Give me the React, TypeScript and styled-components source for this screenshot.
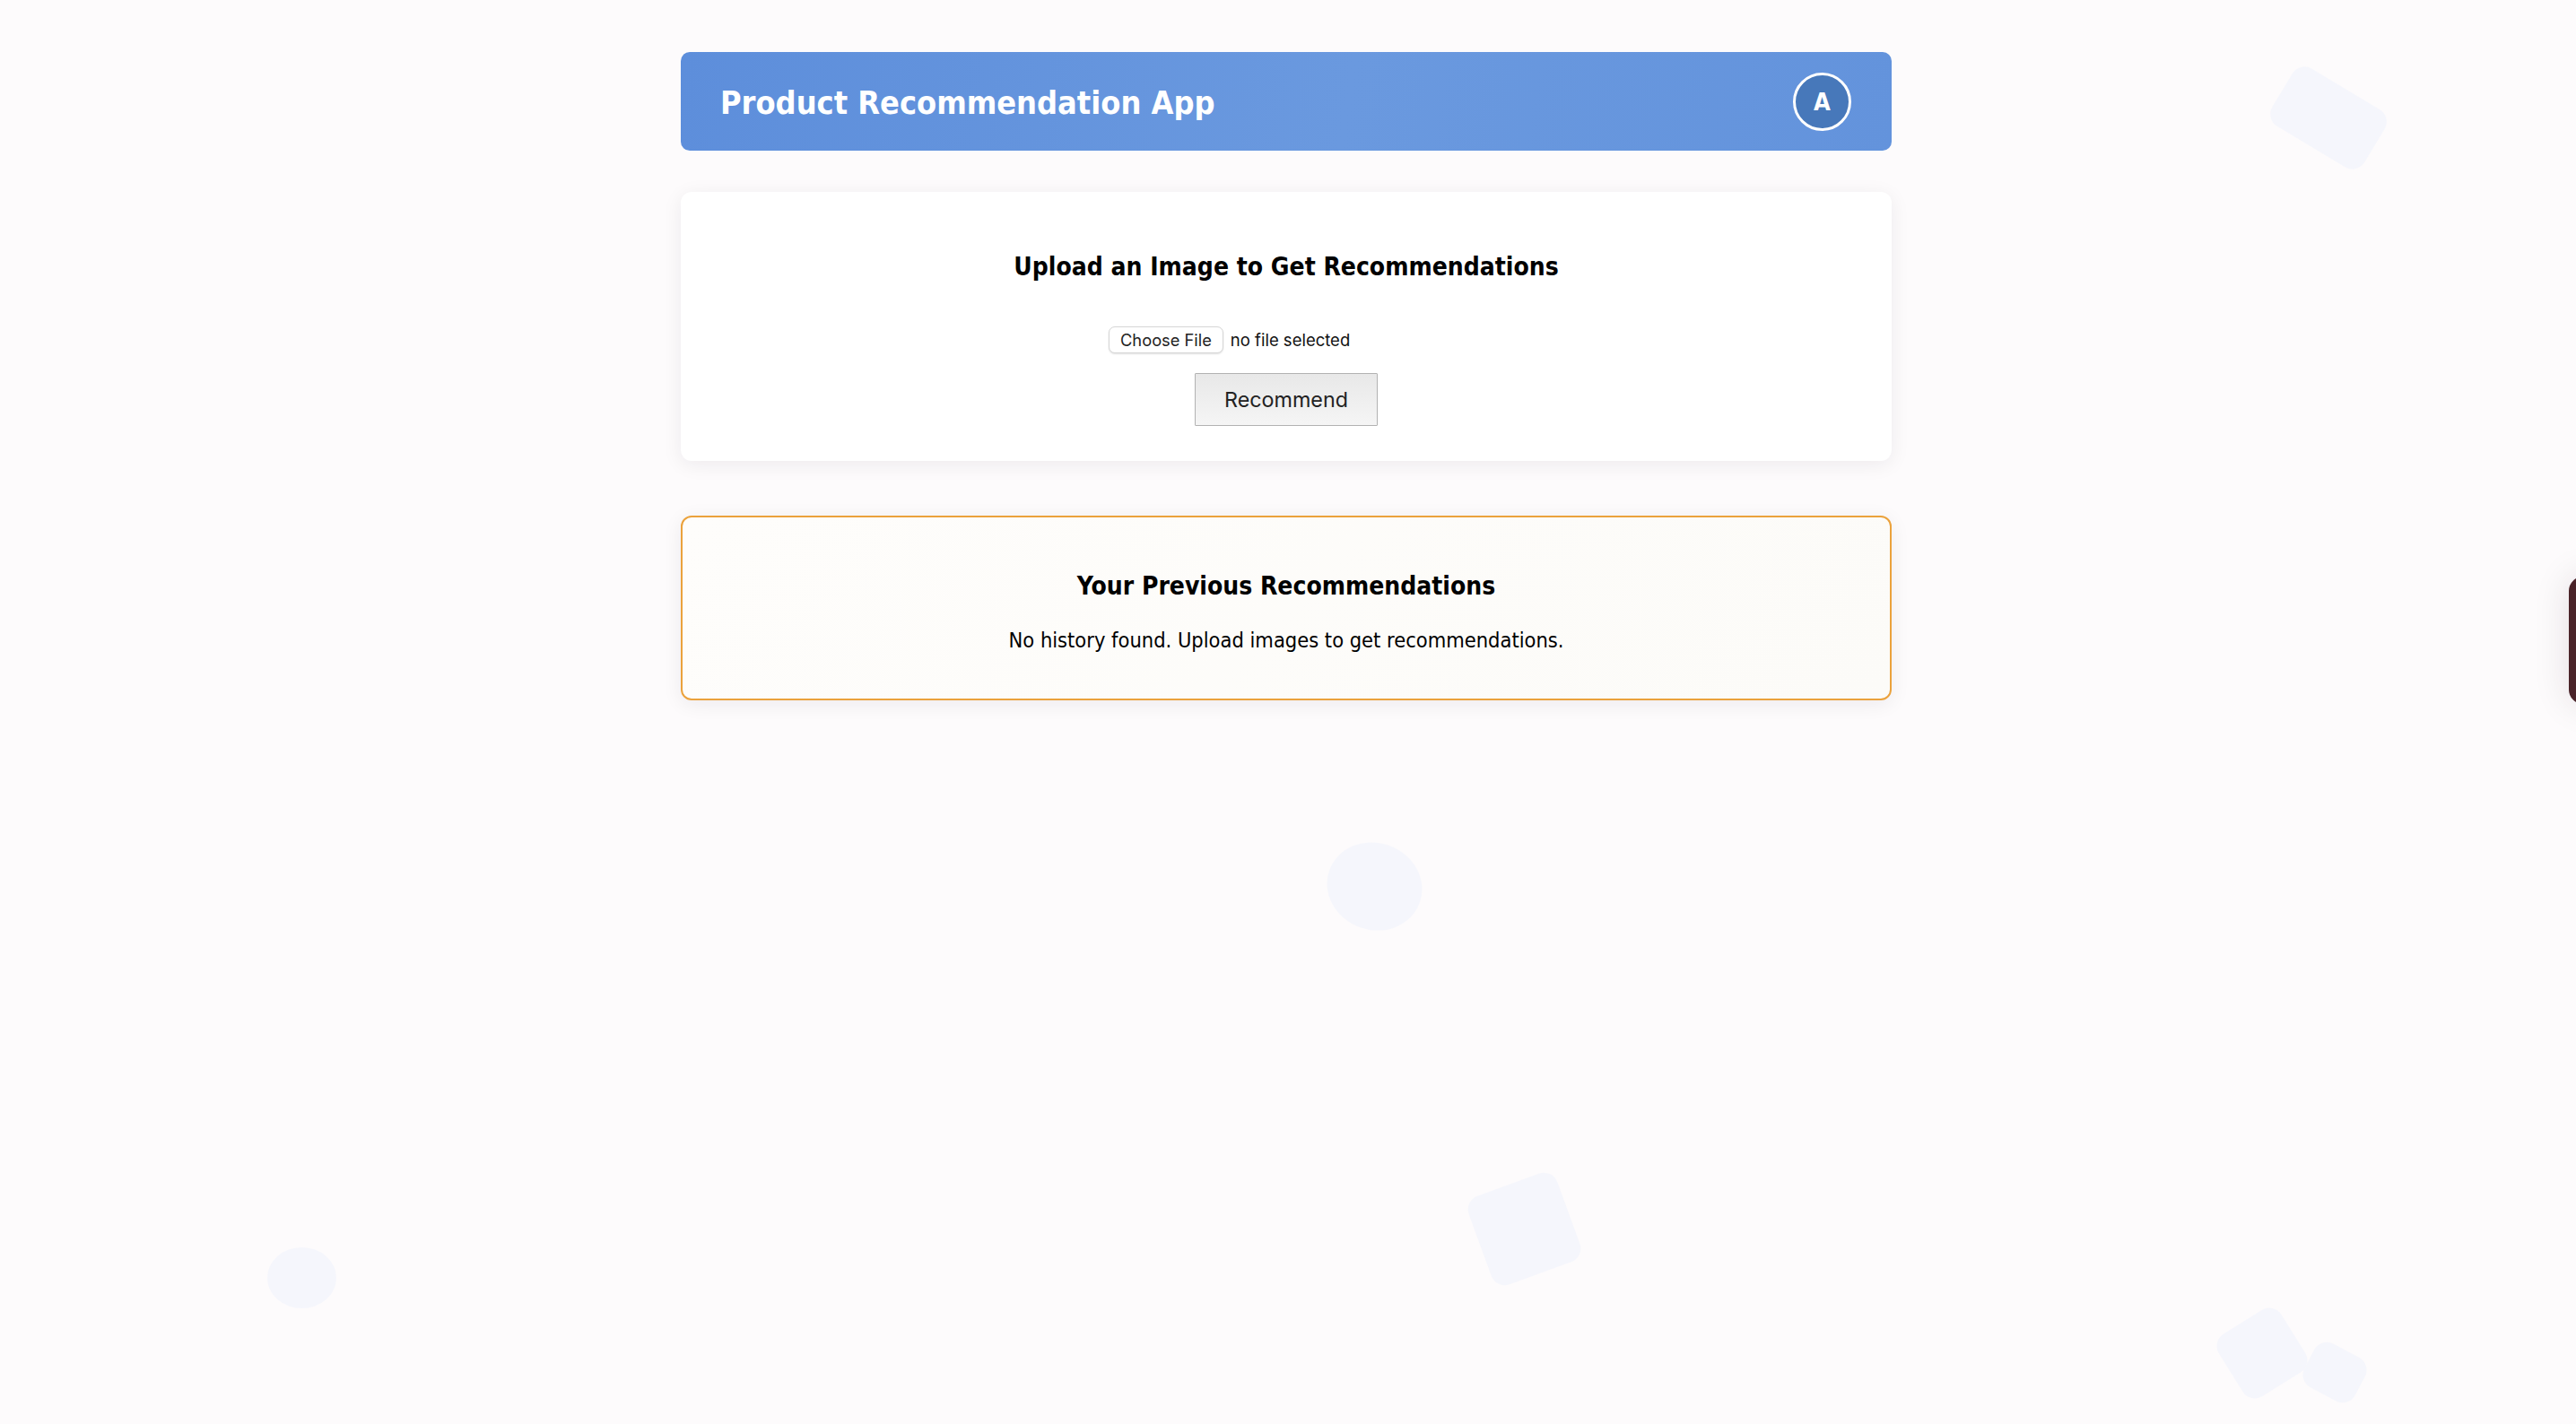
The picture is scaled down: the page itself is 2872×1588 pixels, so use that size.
import React from "react";
import styled, { createGlobalStyle } from "styled-components";

const GlobalStyle = createGlobalStyle`
  html, body {
    margin: 0;
    padding: 0;
    background: #fdfbfc;
  }
  * { box-sizing: border-box; }
`;

const tahoma = `"DejaVu Sans Condensed", "DejaVu Sans", Verdana, sans-serif`;
const system = `Inter, "Liberation Sans", Arial, sans-serif`;

const Page = styled.div`
  position: relative;
  min-height: 100vh;
  overflow: hidden;
  padding: 58px 4px 0 0;
  background: #fdfbfc;
`;

const Container = styled.main`
  position: relative;
  z-index: 1;
  max-width: 1350px;
  margin: 0 auto;
  display: flex;
  flex-direction: column;
`;

const Header = styled.header`
  height: 110px;
  border-radius: 10px;
  padding: 0 45px 0 44px;
  display: flex;
  align-items: center;
  justify-content: space-between;
  background: linear-gradient(100deg, #5d8edb 0%, #6a99df 55%, #6393dc 100%);
`;

const AppTitle = styled.h1`
  margin: 2px 0 0;
  font-family: ${tahoma};
  font-stretch: condensed;
  font-weight: 700;
  font-size: 35.8px;
  color: #ffffff;
`;

const Avatar = styled.div`
  width: 65px;
  height: 65px;
  border-radius: 50%;
  border: 3px solid #ffffff;
  background: #4778ba;
  color: #ffffff;
  display: flex;
  align-items: center;
  justify-content: center;
  font-family: ${tahoma};
  font-stretch: condensed;
  font-weight: 700;
  font-size: 27px;
`;

const Card = styled.section<{ $accent?: boolean }>`
  border-radius: 12px;
  text-align: center;
  display: flex;
  flex-direction: column;
  align-items: center;
  background: ${(p) =>
    p.$accent
      ? "linear-gradient(135deg, #fefdfb 0%, #fcfbf8 100%)"
      : "#ffffff"};
  border: ${(p) => (p.$accent ? "2px solid #eba23c" : "none")};
  box-shadow: 0 4px 22px rgba(30, 20, 40, 0.07);
`;

const UploadCard = styled(Card)`
  margin-top: 46px;
  padding: 67px 40px 39px;
`;

const HistoryCard = styled(Card)`
  margin-top: 61px;
  padding: 60px 40px 50px;
`;

const CardTitle = styled.h3<{ $gap: number }>`
  margin: 0 0 ${(p) => p.$gap}px;
  font-family: ${tahoma};
  font-stretch: condensed;
  font-weight: 700;
  font-size: 28px;
  line-height: 34px;
  color: #000000;
`;

const FileRow = styled.div`
  width: 396px;
  height: 30px;
  margin-bottom: 22px;
  display: flex;
  align-items: center;
  gap: 8px;
`;

const ChooseButton = styled.button`
  height: 30px;
  padding: 0 12px;
  border: 1px solid #d6d6d6;
  border-radius: 7px;
  background: #ffffff;
  box-shadow: 0 1px 2px rgba(0, 0, 0, 0.12);
  font-family: ${system};
  font-size: 18.3px;
  color: #222222;
`;

const FileStatus = styled.span`
  font-family: ${system};
  font-size: 18.5px;
  color: #111111;
`;

const RecommendButton = styled.button`
  height: 59px;
  padding: 0 32px;
  border: 1px solid #b2b2b2;
  border-radius: 1px;
  background: linear-gradient(180deg, #e8e8e8 0%, #f5f5f5 100%);
  font-family: ${system};
  font-size: 23.3px;
  color: #222222;
`;

const EmptyText = styled.p`
  margin: 0;
  font-family: ${tahoma};
  font-stretch: condensed;
  font-size: 23.45px;
  line-height: 29px;
  color: #000000;
`;

const Shape = styled.div<{ $round?: boolean }>`
  position: absolute;
  background: #f4f5fc;
  border-radius: ${(p) => (p.$round ? "50%" : "16px")};
  opacity: 0.95;
`;

const SideTab = styled.div`
  position: absolute;
  left: 2864px;
  top: 643px;
  width: 60px;
  height: 142px;
  border-radius: 16px 0 0 16px;
  background: #4a2329;
  box-shadow: 0 0 40px rgba(40, 20, 30, 0.12);
`;

const shapes = [
  { l: 2536, t: 94, w: 120, h: 75, r: 31, round: false },
  { l: 1479, t: 940, w: 107, h: 97, r: 20, round: true },
  { l: 1647, t: 1318, w: 105, h: 105, r: -20, round: false },
  { l: 2481, t: 1468, w: 82, h: 82, r: -32, round: false },
  { l: 2571, t: 1503, w: 64, h: 55, r: 28, round: false },
  { l: 298, t: 1391, w: 77, h: 68, r: 0, round: true },
];

export default function App() {
  return (
    <>
      <GlobalStyle />
      <Page>
        {shapes.map((s, i) => (
          <Shape
            key={i}
            $round={s.round}
            style={{
              left: s.l,
              top: s.t,
              width: s.w,
              height: s.h,
              transform: `rotate(${s.r}deg)`,
            }}
          />
        ))}
        <Container>
          <Header>
            <AppTitle>Product Recommendation App</AppTitle>
            <Avatar>A</Avatar>
          </Header>
          <UploadCard>
            <CardTitle $gap={49}>Upload an Image to Get Recommendations</CardTitle>
            <FileRow>
              <ChooseButton type="button">Choose File</ChooseButton>
              <FileStatus>no file selected</FileStatus>
            </FileRow>
            <RecommendButton type="button">Recommend</RecommendButton>
          </UploadCard>
          <HistoryCard $accent>
            <CardTitle $gap={29}>Your Previous Recommendations</CardTitle>
            <EmptyText>No history found. Upload images to get recommendations.</EmptyText>
          </HistoryCard>
        </Container>
        <SideTab />
      </Page>
    </>
  );
}
